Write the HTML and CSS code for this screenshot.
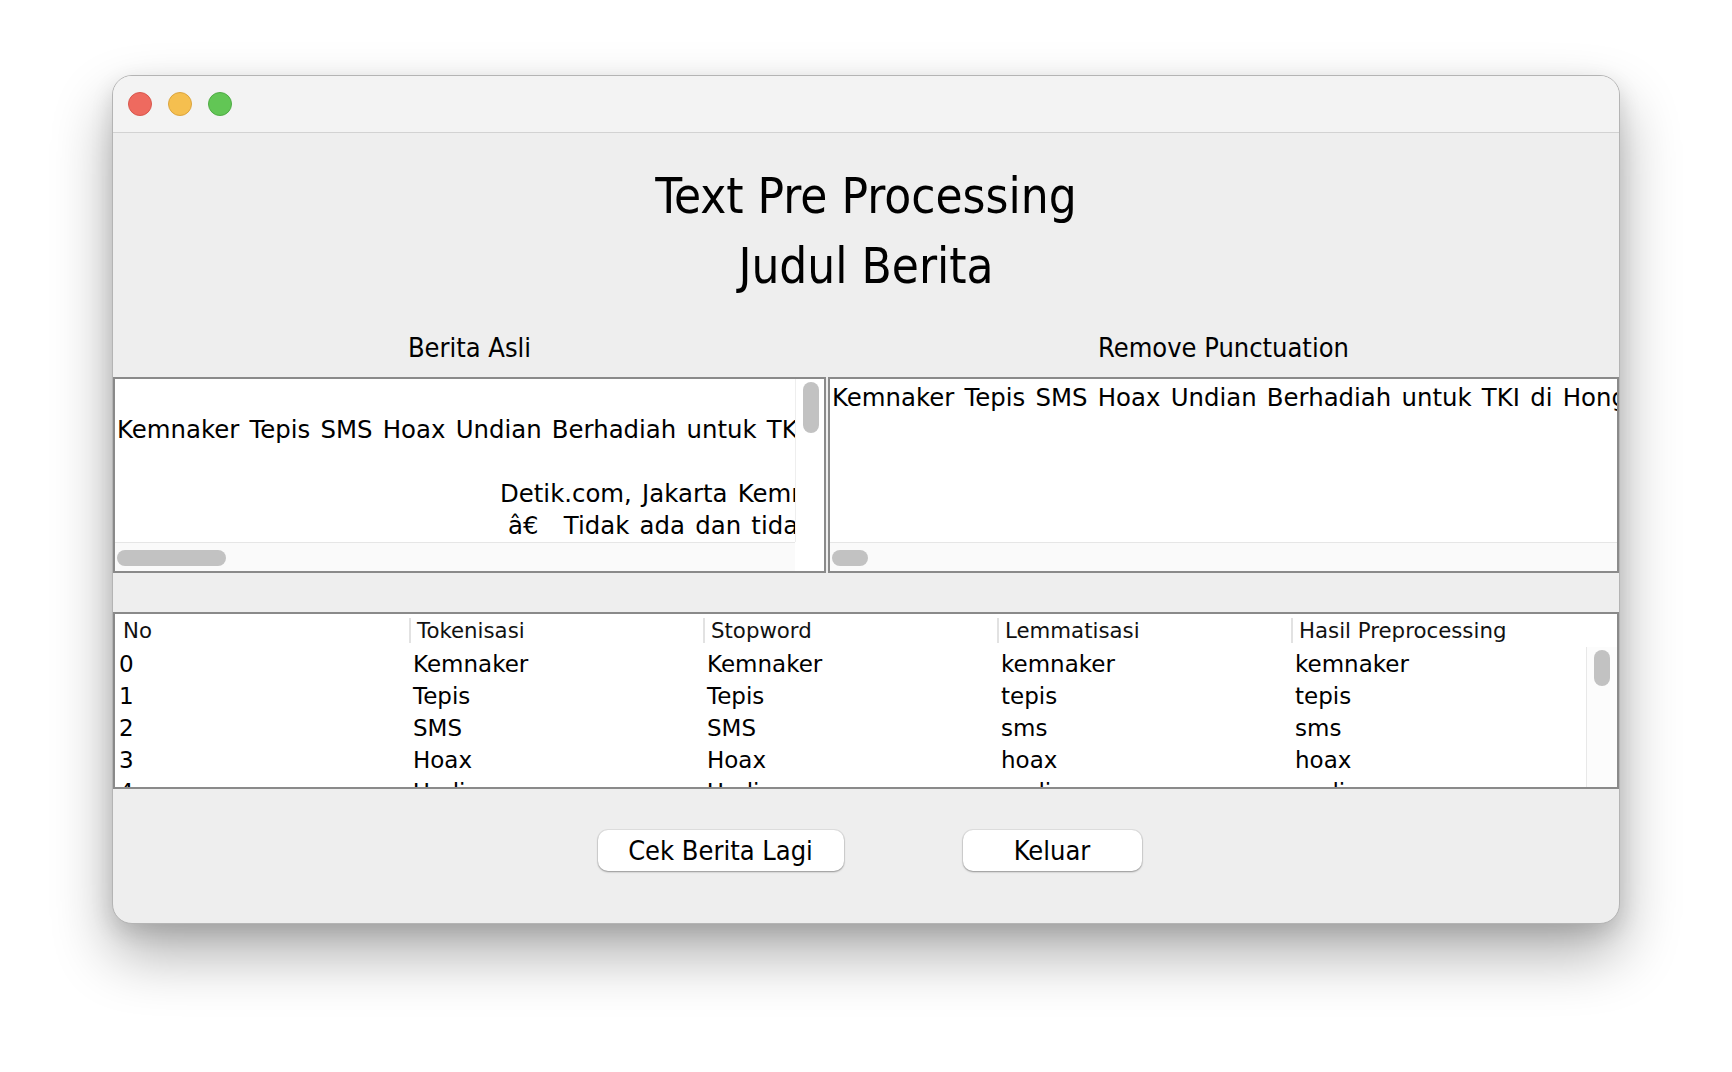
FILE: index.html
```html
<!DOCTYPE html>
<html lang="id">
<head>
<meta charset="utf-8">
<title>Text Pre Processing</title>
<link rel="stylesheet" href="styles.css">
</head>
<body>
<div class="desktop">
  <div class="window">
    <div class="titlebar">
      <span class="light red"></span>
      <span class="light yellow"></span>
      <span class="light green"></span>
    </div>
    <div class="content">
      <h1 class="title">Text Pre Processing<br>Judul Berita</h1>

      <div class="pane-labels">
        <div class="pane-label label-left">Berita Asli</div>
        <div class="pane-label label-right">Remove Punctuation</div>
      </div>

      <div class="panes">
        <div class="scrollpane pane-left">
          <div class="sp-main">
            <div class="viewport">
              <div class="textarea">
                <div class="line"></div>
                <div class="line">Kemnaker Tepis SMS Hoax Undian Berhadiah untuk TKI di Hong Kong</div>
                <div class="line"></div>
                <div class="line indent-a">Detik.com, Jakarta Kemnaker (Kementerian Ketenagakerjaan) menepis kabar</div>
                <div class="line indent-b">â€&#8201;  Tidak ada dan tidak pernah ada undian berhadiah</div>
              </div>
            </div>
            <div class="vscroll"><div class="vthumb"></div></div>
          </div>
          <div class="sp-bottom">
            <div class="hscroll"><div class="hthumb thumb-wide"></div></div>
            <div class="corner"></div>
          </div>
        </div>

        <div class="scrollpane pane-right">
          <div class="sp-main">
            <div class="viewport">
              <div class="textarea">
                <div class="line">Kemnaker Tepis SMS Hoax Undian Berhadiah untuk TKI di Hong Kong Detikcom Jakarta Kemnaker</div>
              </div>
            </div>
          </div>
          <div class="sp-bottom">
            <div class="hscroll"><div class="hthumb thumb-small"></div></div>
          </div>
        </div>
      </div>

      <div class="band"></div>

      <div class="table">
        <div class="thead">
          <div class="th">No</div>
          <div class="th sep">Tokenisasi</div>
          <div class="th sep">Stopword</div>
          <div class="th sep">Lemmatisasi</div>
          <div class="th sep">Hasil Preprocessing</div>
          <div class="th sep"></div>
        </div>
        <div class="tbody">
          <div class="rows">
            <div class="td">0</div><div class="td">Kemnaker</div><div class="td">Kemnaker</div><div class="td">kemnaker</div><div class="td">kemnaker</div>
            <div class="td">1</div><div class="td">Tepis</div><div class="td">Tepis</div><div class="td">tepis</div><div class="td">tepis</div>
            <div class="td">2</div><div class="td">SMS</div><div class="td">SMS</div><div class="td">sms</div><div class="td">sms</div>
            <div class="td">3</div><div class="td">Hoax</div><div class="td">Hoax</div><div class="td">hoax</div><div class="td">hoax</div>
            <div class="td">4</div><div class="td">Undian</div><div class="td">Undian</div><div class="td">undi</div><div class="td">undi</div>
          </div>
          <div class="table-vscroll"><div class="table-thumb"></div></div>
        </div>
      </div>

      <div class="buttons">
        <button class="btn btn-cek">Cek Berita Lagi</button>
        <button class="btn btn-keluar">Keluar</button>
      </div>
    </div>
  </div>
</div>
</body>
</html>
```

FILE: styles.css
```css
* { box-sizing: border-box; }

html, body {
  margin: 0;
  padding: 0;
  background: #ffffff;
}

.desktop {
  width: 1732px;
  height: 1072px;
  padding: 75px 0 0 112px;
  overflow: hidden;
  background: #ffffff;
}

.window {
  width: 1508px;
  height: 849px;
  border: 1px solid #b4b4b4;
  border-radius: 20px;
  background: #eeeeee;
  overflow: hidden;
  box-shadow: 0 30px 60px rgba(0, 0, 0, 0.32), 0 8px 22px rgba(0, 0, 0, 0.12);
  display: flex;
  flex-direction: column;
}

.titlebar {
  height: 57px;
  flex: 0 0 57px;
  background: #f3f3f3;
  border-bottom: 1px solid #d2d2d2;
  display: flex;
  align-items: center;
  gap: 16px;
  padding: 0 0 1px 15px;
}

.light {
  width: 24px;
  height: 24px;
  border-radius: 50%;
  display: block;
}
.red { background: #ee6a5f; border: 1px solid #d8574d; }
.yellow { background: #f5bf4f; border: 1px solid #dba43e; }
.green { background: #62c655; border: 1px solid #4fab45; }

.content {
  flex: 1;
  display: flex;
  flex-direction: column;
}

.title {
  margin: 0;
  padding-top: 29px;
  font-family: "DejaVu Sans Condensed", "DejaVu Sans", sans-serif;
  font-stretch: condensed;
  font-weight: normal;
  font-size: 49px;
  line-height: 70px;
  text-align: center;
  color: #000;
}

.pane-labels {
  height: 75px;
  display: flex;
  align-items: flex-end;
  padding-bottom: 9px;
}

.pane-label {
  font-family: "DejaVu Sans Condensed", "DejaVu Sans", sans-serif;
  font-stretch: condensed;
  font-size: 27px;
  line-height: 40px;
  text-align: center;
  color: #000;
}
.label-left { width: 713px; }
.label-right { width: 793px; padding-left: 2px; }

.panes {
  height: 196px;
  display: flex;
  gap: 2px;
}

.scrollpane {
  border: 2px solid #8a8a8a;
  background: #ffffff;
  display: flex;
  flex-direction: column;
}
.pane-left { width: 713px; }
.pane-right { width: 791px; }

.sp-main {
  height: 163px;
  display: flex;
}

.viewport {
  flex: 1;
  min-width: 0;
  overflow: hidden;
  background: #fff;
}

.textarea {
  padding: 3px 0 0 2px;
  font-family: "DejaVu Sans", sans-serif;
  font-size: 24.4px;
  word-spacing: 2.5px;
  line-height: 32px;
  color: #000;
}

.line {
  height: 32px;
  white-space: pre;
}
.indent-a { padding-left: 383px; }
.indent-b { padding-left: 391px; }

.vscroll {
  width: 29px;
  flex: 0 0 29px;
  background: #fff;
  border-left: 1px solid #eeeeee;
  padding: 3px 0 0 7px;
}

.vthumb {
  width: 16px;
  height: 51px;
  border-radius: 8px;
  background: #c2c2c2;
}

.sp-bottom {
  height: 29px;
  display: flex;
}

.hscroll {
  flex: 1;
  background: #fafafa;
  border-top: 1px solid #e6e6e6;
  padding: 7px 0 0 2px;
}

.hthumb {
  height: 16px;
  border-radius: 8px;
  background: #c2c2c2;
}
.thumb-wide { width: 109px; }
.thumb-small { width: 36px; }

.corner {
  width: 29px;
  background: #fff;
}

.band {
  height: 39px;
}

.table {
  height: 177px;
  border: 2px solid #8a8a8a;
  background: #fff;
  display: flex;
  flex-direction: column;
}

.thead {
  height: 33px;
  flex: 0 0 33px;
  display: grid;
  grid-template-columns: repeat(5, 294px) 1fr;
  align-items: center;
}

.th {
  font-family: "DejaVu Sans", sans-serif;
  font-size: 21.3px;
  line-height: 25px;
  color: #111;
  padding-left: 8px;
  white-space: nowrap;
}
.th.sep {
  border-left: 2px solid #e2e2e2;
  padding-left: 6px;
}

.tbody {
  flex: 1;
  display: flex;
  overflow: hidden;
}

.rows {
  width: 1470px;
  display: grid;
  grid-template-columns: repeat(5, 294px);
  grid-auto-rows: 32px;
  align-content: start;
  padding-top: 1px;
}

.td {
  font-family: "DejaVu Sans", sans-serif;
  font-size: 23px;
  line-height: 32px;
  color: #000;
  padding-left: 4px;
  white-space: nowrap;
}

.table-vscroll {
  flex: 1;
  border-left: 1px solid #e8e8e8;
  margin-left: 1px;
  padding: 3px 0 0 7px;
  background: #fcfcfc;
}

.table-thumb {
  width: 16px;
  height: 36px;
  border-radius: 8px;
  background: #c2c2c2;
}

.buttons {
  display: flex;
  justify-content: center;
  gap: 119px;
  padding: 41px 0 0 7px;
}

.btn {
  height: 41px;
  border: none;
  border-radius: 10px;
  background: #ffffff;
  box-shadow: 0 1px 2px rgba(0, 0, 0, 0.35), 0 0 0 1px rgba(0, 0, 0, 0.06);
  font-family: "DejaVu Sans Condensed", "DejaVu Sans", sans-serif;
  font-stretch: condensed;
  font-size: 27px;
  line-height: 41px;
  color: #000;
  padding: 0;
}
.btn-cek { width: 246px; }
.btn-keluar { width: 179px; }
```
